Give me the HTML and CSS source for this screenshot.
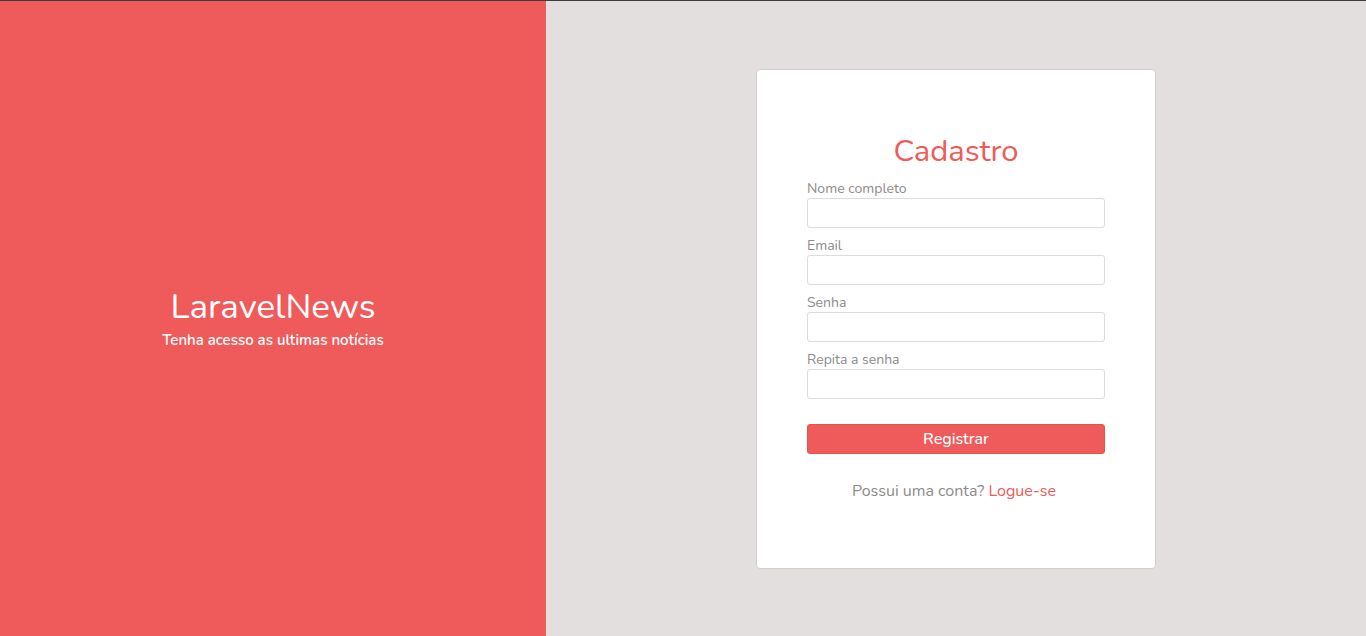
FILE: index.html
```html
<!DOCTYPE html>
<html lang="pt">
<head>
<meta charset="utf-8">
<title>LaravelNews - Cadastro</title>
<link rel="stylesheet" href="styles.css">
</head>
<body>
<div class="page">
  <section class="brand">
    <h1 class="brand-title">LaravelNews</h1>
    <p class="brand-sub">Tenha acesso as ultimas notícias</p>
  </section>
  <section class="side">
    <div class="card">
      <h2 class="card-title">Cadastro</h2>
      <form class="form">
        <div class="field">
          <label class="label">Nome completo</label>
          <input class="input" type="text">
        </div>
        <div class="field">
          <label class="label">Email</label>
          <input class="input" type="email">
        </div>
        <div class="field">
          <label class="label">Senha</label>
          <input class="input" type="password">
        </div>
        <div class="field">
          <label class="label">Repita a senha</label>
          <input class="input" type="password">
        </div>
        <button class="btn" type="button">Registrar</button>
      </form>
      <p class="footer">Possui uma conta? <a class="link" href="#">Logue-se</a></p>
    </div>
  </section>
</div>
</body>
</html>
```
FILE: styles.css
```css
* { box-sizing: border-box; }
html, body { margin: 0; padding: 0; }
body {
  font-family: "Nunito", "Lato", "Open Sans", sans-serif;
  border-top: 1px solid #3c3c3c;
  background: #e4dfdf;
}
.page {
  display: flex;
  height: 635px;
}
.brand {
  width: 546px;
  background: #ef5a5a;
  color: #fff;
  display: flex;
  flex-direction: column;
  align-items: center;
  justify-content: center;
}
.brand-title {
  margin: 0;
  font-size: 35px;
  font-weight: 400;
  line-height: 38px;
}
.brand-sub {
  margin: 5px 0 0;
  font-size: 15px;
  font-weight: 600;
  line-height: 18px;
}
.side {
  flex: 1;
  display: flex;
  align-items: center;
  justify-content: center;
}
.card {
  width: 400px;
  height: 500px;
  background: #fff;
  border: 1px solid #cfcfcf;
  border-radius: 4px;
  padding: 60px 50px 0;
}
.card-title {
  margin: 0 0 7px;
  text-align: center;
  color: #ef5a5a;
  font-size: 31px;
  font-weight: 400;
  line-height: 42px;
}
.form {
  display: flex;
  flex-direction: column;
  gap: 8px;
}
.field {
  display: flex;
  flex-direction: column;
}
.label {
  color: #8c8c8c;
  font-size: 14px;
  line-height: 19px;
  height: 19px;
}
.input {
  height: 30px;
  border: 1px solid #dcdcdc;
  border-radius: 3px;
  background: #fff;
  width: 100%;
}
.btn {
  margin-top: 17px;
  height: 30px;
  width: 100%;
  border: 1px solid #e55050;
  border-radius: 3px;
  background: #ef5a5a;
  color: #fff;
  font-family: inherit;
  font-size: 16px;
  font-weight: 500;
}
.footer {
  margin: 26px 0 0;
  padding-right: 4px;
  text-align: center;
  color: #8c8c8c;
  font-size: 16px;
}
.link {
  color: #ef5a5a;
  text-decoration: none;
}
```
